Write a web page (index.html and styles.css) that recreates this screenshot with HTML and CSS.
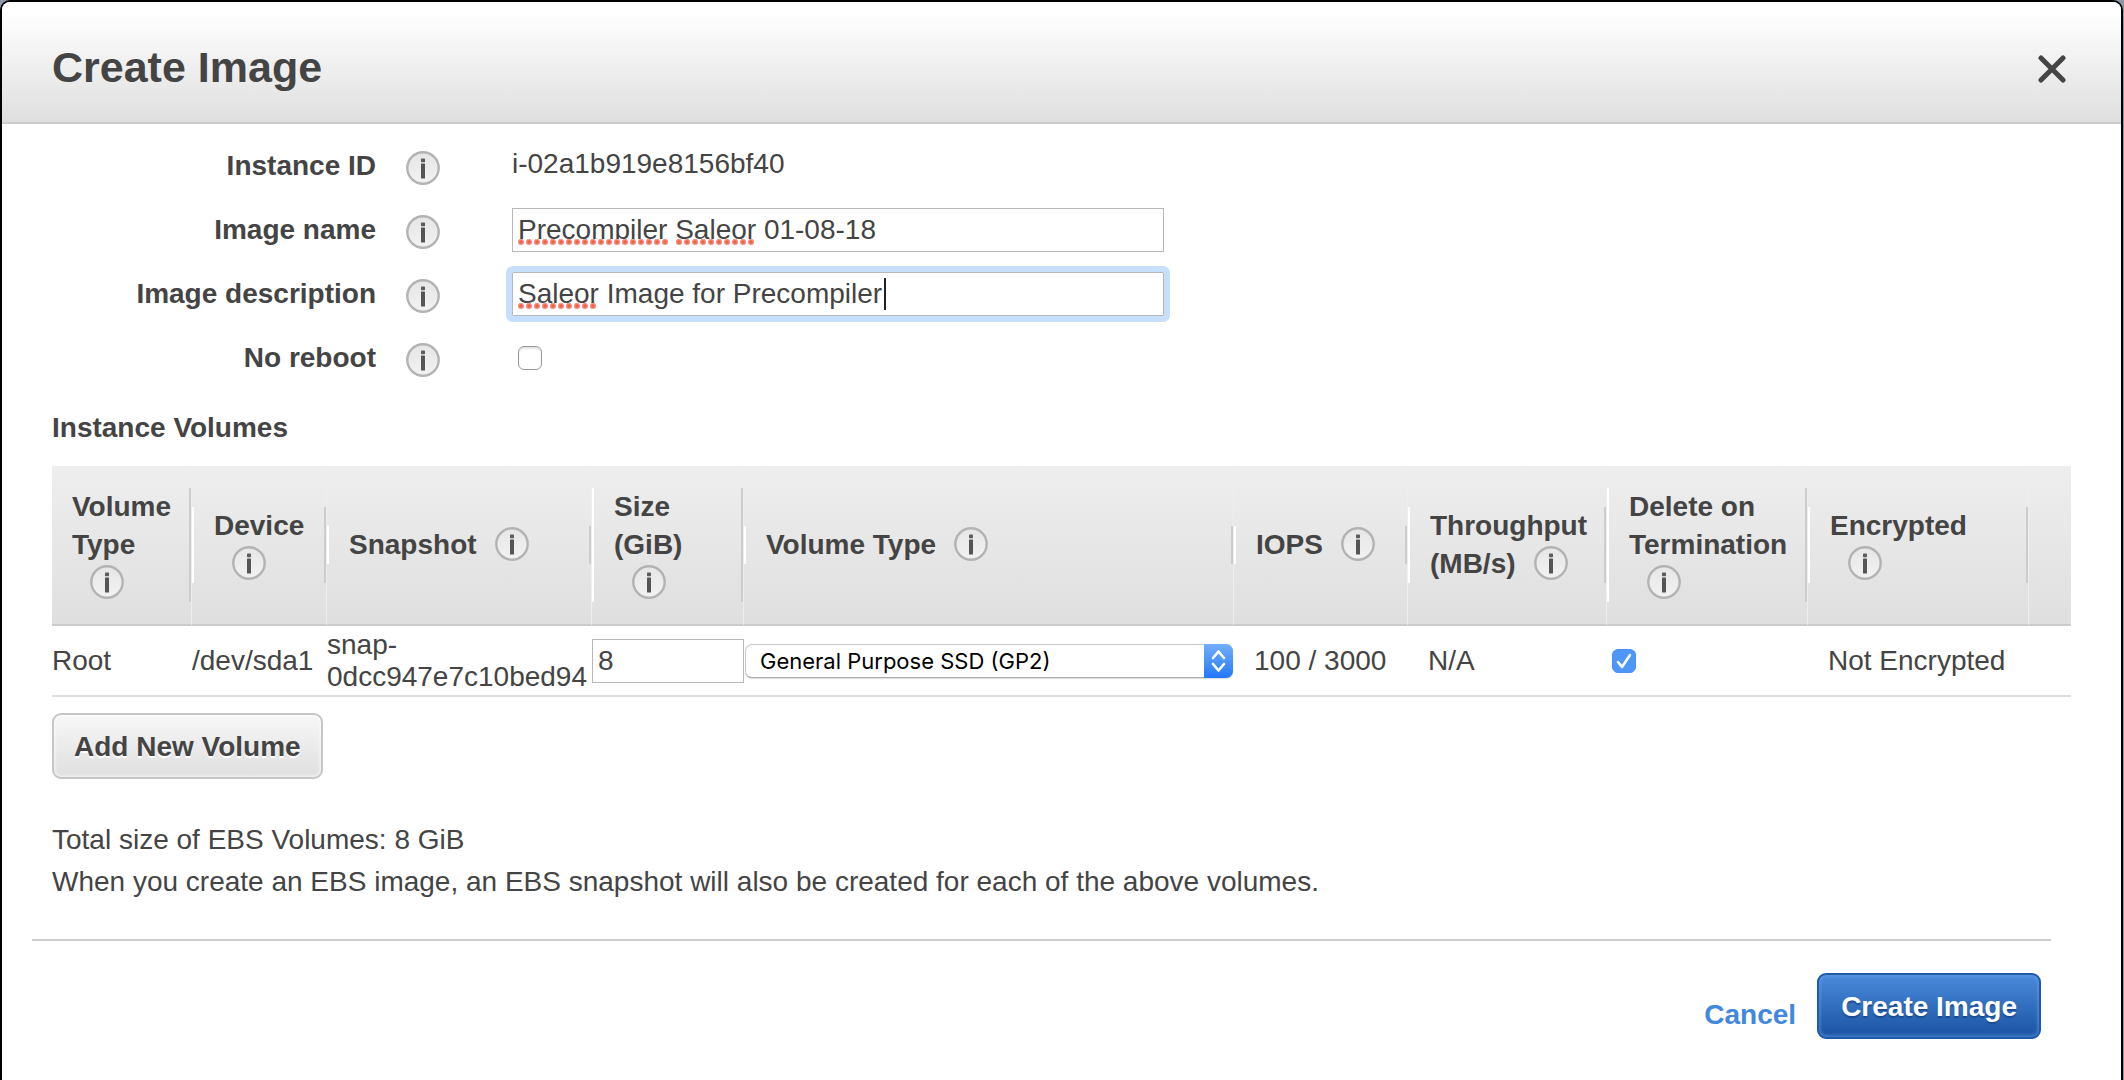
FILE: index.html
```html
<!DOCTYPE html>
<html lang="en">
<head>
<meta charset="utf-8">
<title>Create Image</title>
<link rel="stylesheet" href="styles.css">
</head>
<body>
<svg class="sprite" aria-hidden="true">
  <defs>
    <linearGradient id="info-fill" x1="0" y1="0" x2="0" y2="1">
      <stop offset="0" stop-color="#e6e6e6"/>
      <stop offset="1" stop-color="#f2f2f2"/>
    </linearGradient>
    <symbol id="info" viewBox="0 0 34 34">
      <circle cx="17" cy="17" r="15.7" fill="url(#info-fill)" stroke="#b3b3b3" stroke-width="2.4"/>
      <rect x="15" y="7.6" width="4" height="3.6" rx="0.6" fill="#5c5c5c"/>
      <rect x="15" y="12.4" width="4" height="15.2" rx="0.6" fill="#555"/>
    </symbol>
  </defs>
</svg>
<main class="dialog">
  <header class="dialog-header">
    <h1 class="dialog-title">Create Image</h1>
    <button class="close" type="button" aria-label="Close">
      <svg viewBox="0 0 28 28" width="28" height="28"><path d="M3 3 25 25M25 3 3 25" stroke="#444" stroke-width="5" stroke-linecap="round"/></svg>
    </button>
  </header>

  <form class="dialog-form">
    <div class="fields">
      <div class="field">
        <span class="label">Instance ID</span>
        <svg class="info"><use href="#info"/></svg>
        <span class="value">i-02a1b919e8156bf40</span>
      </div>
      <div class="field">
        <label class="label" for="name">Image name</label>
        <svg class="info"><use href="#info"/></svg>
        <span class="control">
          <input class="text-input" id="name" type="text" value="Precompiler Saleor 01-08-18">
          <span class="misspelt misspelt-compiler"></span>
          <span class="misspelt misspelt-second"></span>
        </span>
      </div>
      <div class="field">
        <label class="label" for="description">Image description</label>
        <svg class="info"><use href="#info"/></svg>
        <span class="control">
          <input class="text-input is-focused" id="description" type="text" value="Saleor Image for Precompiler">
          <span class="misspelt misspelt-first"></span>
          <span class="caret"></span>
        </span>
      </div>
      <div class="field">
        <label class="label" for="no-reboot">No reboot</label>
        <svg class="info"><use href="#info"/></svg>
        <input class="checkbox" id="no-reboot" type="checkbox">
      </div>
    </div>

    <h2 class="section-title">Instance Volumes</h2>
    <table class="volumes">
      <colgroup>
        <col class="col-kind"><col class="col-device"><col class="col-snapshot"><col class="col-size"><col>
        <col class="col-iops"><col class="col-throughput"><col class="col-delete"><col class="col-encrypted"><col class="col-end">
      </colgroup>
      <thead>
        <tr>
          <th><div class="head">Volume Type<svg class="info"><use href="#info"/></svg></div></th>
          <th><div class="head">Device<svg class="info"><use href="#info"/></svg></div></th>
          <th><div class="head">Snapshot<svg class="info"><use href="#info"/></svg></div></th>
          <th><div class="head">Size (GiB)<svg class="info"><use href="#info"/></svg></div></th>
          <th><div class="head">Volume Type<svg class="info"><use href="#info"/></svg></div></th>
          <th><div class="head">IOPS<svg class="info"><use href="#info"/></svg></div></th>
          <th><div class="head">Throughput (MB/s)<svg class="info"><use href="#info"/></svg></div></th>
          <th><div class="head">Delete on Termination<svg class="info"><use href="#info"/></svg></div></th>
          <th><div class="head">Encrypted<svg class="info"><use href="#info"/></svg></div></th>
          <th></th>
        </tr>
      </thead>
      <tbody>
        <tr>
          <td>Root</td>
          <td>/dev/sda1</td>
          <td>snap-0dcc947e7c10bed94</td>
          <td><input class="text-input" type="text" value="8" aria-label="Size (GiB)"></td>
          <td>
            <span class="select">
              <select class="select-field" aria-label="Volume Type"><option>General Purpose SSD (GP2)</option></select>
              <svg class="select-arrows" viewBox="0 0 29 34"><path d="M9 14 14.500 7.500 20 14M9 20 14.500 26.500 20 20" fill="none" stroke="#fff" stroke-width="2.600" stroke-linecap="round" stroke-linejoin="round"/></svg>
            </span>
          </td>
          <td class="inset">100 / 3000</td>
          <td class="inset">N/A</td>
          <td><input class="checkbox" type="checkbox" checked aria-label="Delete on Termination"></td>
          <td class="inset">Not Encrypted</td>
          <td></td>
        </tr>
      </tbody>
    </table>
    <button class="button" type="button">Add New Volume</button>

    <div class="notes">
      <p>Total size of EBS Volumes: 8 GiB</p>
      <p>When you create an EBS image, an EBS snapshot will also be created for each of the above volumes.</p>
    </div>

    <footer class="dialog-footer">
      <a class="cancel" href="#">Cancel</a>
      <button class="button button-primary" type="submit">Create Image</button>
    </footer>
  </form>
</main>
</body>
</html>
```
FILE: styles.css
```css
* {
  box-sizing: border-box;
}

body {
  margin: 0;
  background: #8f99a6;
  color: #444;
  font: 28px/32px "Liberation Sans", Arial, sans-serif;
}

.sprite {
  position: absolute;
  width: 0;
  height: 0;
}

.dialog {
  min-height: 100vh;
  margin-right: 1px;
  border: 2px solid #000;
  border-bottom: 0;
  border-radius: 10px 10px 0 0;
  background: #fff;
  overflow: hidden;
}

.dialog-header {
  display: flex;
  align-items: center;
  justify-content: space-between;
  height: 122px;
  padding: 0 51px 0 50px;
  border-bottom: 2px solid #ccc;
  background: linear-gradient(#fff 8%, #dfdfdf);
}

.dialog-title {
  margin: 0;
  padding-top: 10px;
  font-size: 43px;
  line-height: 48px;
}

.close {
  display: flex;
  margin-top: 14px;
  padding: 4px;
  border: 0;
  background: none;
}

.dialog-form {
  padding: 10px 50px 32px;
}

.fields {
  display: grid;
}

.field {
  display: grid;
  grid-template-columns: 324px 34px 652px;
  column-gap: 30px;
  align-items: center;
  height: 64px;
}

.label {
  font-weight: bold;
  text-align: right;
}

.info {
  width: 34px;
  height: 34px;
}

.field > .info {
  margin-top: 4px;
}

.field > :last-child {
  margin-left: 42px;
}

.value {
  padding-bottom: 4px;
}

.control {
  position: relative;
  display: block;
  width: 652px;
}

.text-input {
  display: block;
  width: 100%;
  height: 44px;
  padding: 0 5px;
  border: 1px solid #b8b8b8;
  border-radius: 0;
  background: #fff;
  color: #444;
  font: inherit;
}

.is-focused {
  outline: 6px solid #c5dffc;
  border-radius: 1px;
}

/* Row of red dots under a word the spelling checker rejects */
.misspelt {
  position: absolute;
  top: 31px;
  height: 6px;
  background: radial-gradient(circle at 3px 3px, #f0604c 1px, #f8a59a 3px, transparent 3px) 0 0 / 8px 6px repeat-x;
}

.misspelt-compiler {
  left: 6px;
  width: 150px;
}

.misspelt-second {
  left: 164px;
  width: 80px;
}

.misspelt-first {
  left: 6px;
  width: 80px;
}

.caret {
  position: absolute;
  top: 6px;
  left: 372px;
  width: 2px;
  height: 32px;
  background: #222;
}

.checkbox {
  display: block;
  width: 24px;
  height: 24px;
  margin: 0 5px;
  appearance: none;
  border: 1px solid #999;
  border-radius: 6px;
  background: #fff;
  box-shadow: inset 0 2px 2px #e4e4e4;
}

.field > .checkbox {
  margin-left: 48px;
}

.checkbox:checked {
  border-color: #4a90f5;
  background: #4f97f7 url("data:image/svg+xml,%3Csvg xmlns='http://www.w3.org/2000/svg' viewBox='0 0 22 22'%3E%3Cpath d='M5 12 9 17 17 5' fill='none' stroke='white' stroke-width='2.500' stroke-linecap='round' stroke-linejoin='round'/%3E%3C/svg%3E");
  box-shadow: none;
}

.section-title {
  margin: 22px 0;
  font-size: 28px;
  line-height: 32px;
}

.volumes {
  width: 100%;
  table-layout: fixed;
  border-spacing: 0;
}

.col-kind { width: 140px; }
.col-device { width: 135px; }
.col-snapshot { width: 265px; }
.col-size { width: 152px; }
.col-iops { width: 174px; }
.col-throughput { width: 199px; }
.col-delete { width: 201px; }
.col-encrypted { width: 221px; }
.col-end { width: 42px; }

.volumes thead tr {
  background: linear-gradient(#eee, #dfdfdf);
}

.volumes th {
  height: 160px;
  padding: 0;
  border-right: 1px solid #eee;
  border-bottom: 2px solid #ccc;
  text-align: left;
}

.volumes th:last-child {
  border-right: 0;
}

.head {
  padding: 0 14px 0 20px;
  border-left: 2px solid #fff;
  border-right: 2px solid #ccc;
  line-height: 38px;
}

th:first-child .head {
  border-left: 0;
}

.head .info {
  margin: -5px 0 0 18px;
  vertical-align: middle;
}

.volumes td {
  height: 71px;
  padding: 0;
  border-bottom: 2px solid #ddd;
  overflow-wrap: break-word;
}

.volumes .inset {
  padding-left: 20px;
}

.select {
  position: relative;
  display: block;
  margin: 0 1px;
}

.select-field {
  display: block;
  width: 100%;
  height: 34px;
  padding: 0 40px 0 14px;
  appearance: none;
  border: 1px solid #c8c8c8;
  border-bottom-color: #aaa;
  border-radius: 7px;
  background: #fff;
  box-shadow: 0 1px 1px #ddd;
  color: #000;
  font: 22px/30px Inter, sans-serif;
}

.select-arrows {
  position: absolute;
  top: 0;
  right: 0;
  width: 29px;
  height: 34px;
  border-radius: 0 7px 7px 0;
  background: linear-gradient(#72affa, #2378f8);
}

.button {
  height: 66px;
  padding: 2px 20px 0;
  border: 2px solid #c6c6c6;
  border-radius: 9px;
  background: linear-gradient(#f7f7f7, #dfdfdf);
  box-shadow: inset 0 0 4px #fff;
  color: #444;
  font: bold 28px/32px "Liberation Sans", Arial, sans-serif;
  text-shadow: 0 2px 0 #fff;
}

.volumes + .button {
  margin-top: 16px;
}

.notes {
  margin-top: 40px;
  line-height: 42px;
}

.notes p {
  margin: 0;
}

.dialog-footer {
  display: flex;
  justify-content: flex-end;
  gap: 21px;
  margin: 36px 20px 0 -20px;
  padding: 32px 10px 0 0;
  border-top: 2px solid #ccc;
}

.cancel {
  padding-top: 26px;
  color: #48d;
  font-weight: bold;
  text-decoration: none;
}

.button-primary {
  padding: 2px 22px 0;
  border-color: #1f5aa8;
  background: linear-gradient(#4a8adb, #1f58a8 90%);
  box-shadow: inset 0 0 4px #6ca2e8;
  color: #fff;
  text-shadow: 0 2px 1px #1b4c90;
}
```
